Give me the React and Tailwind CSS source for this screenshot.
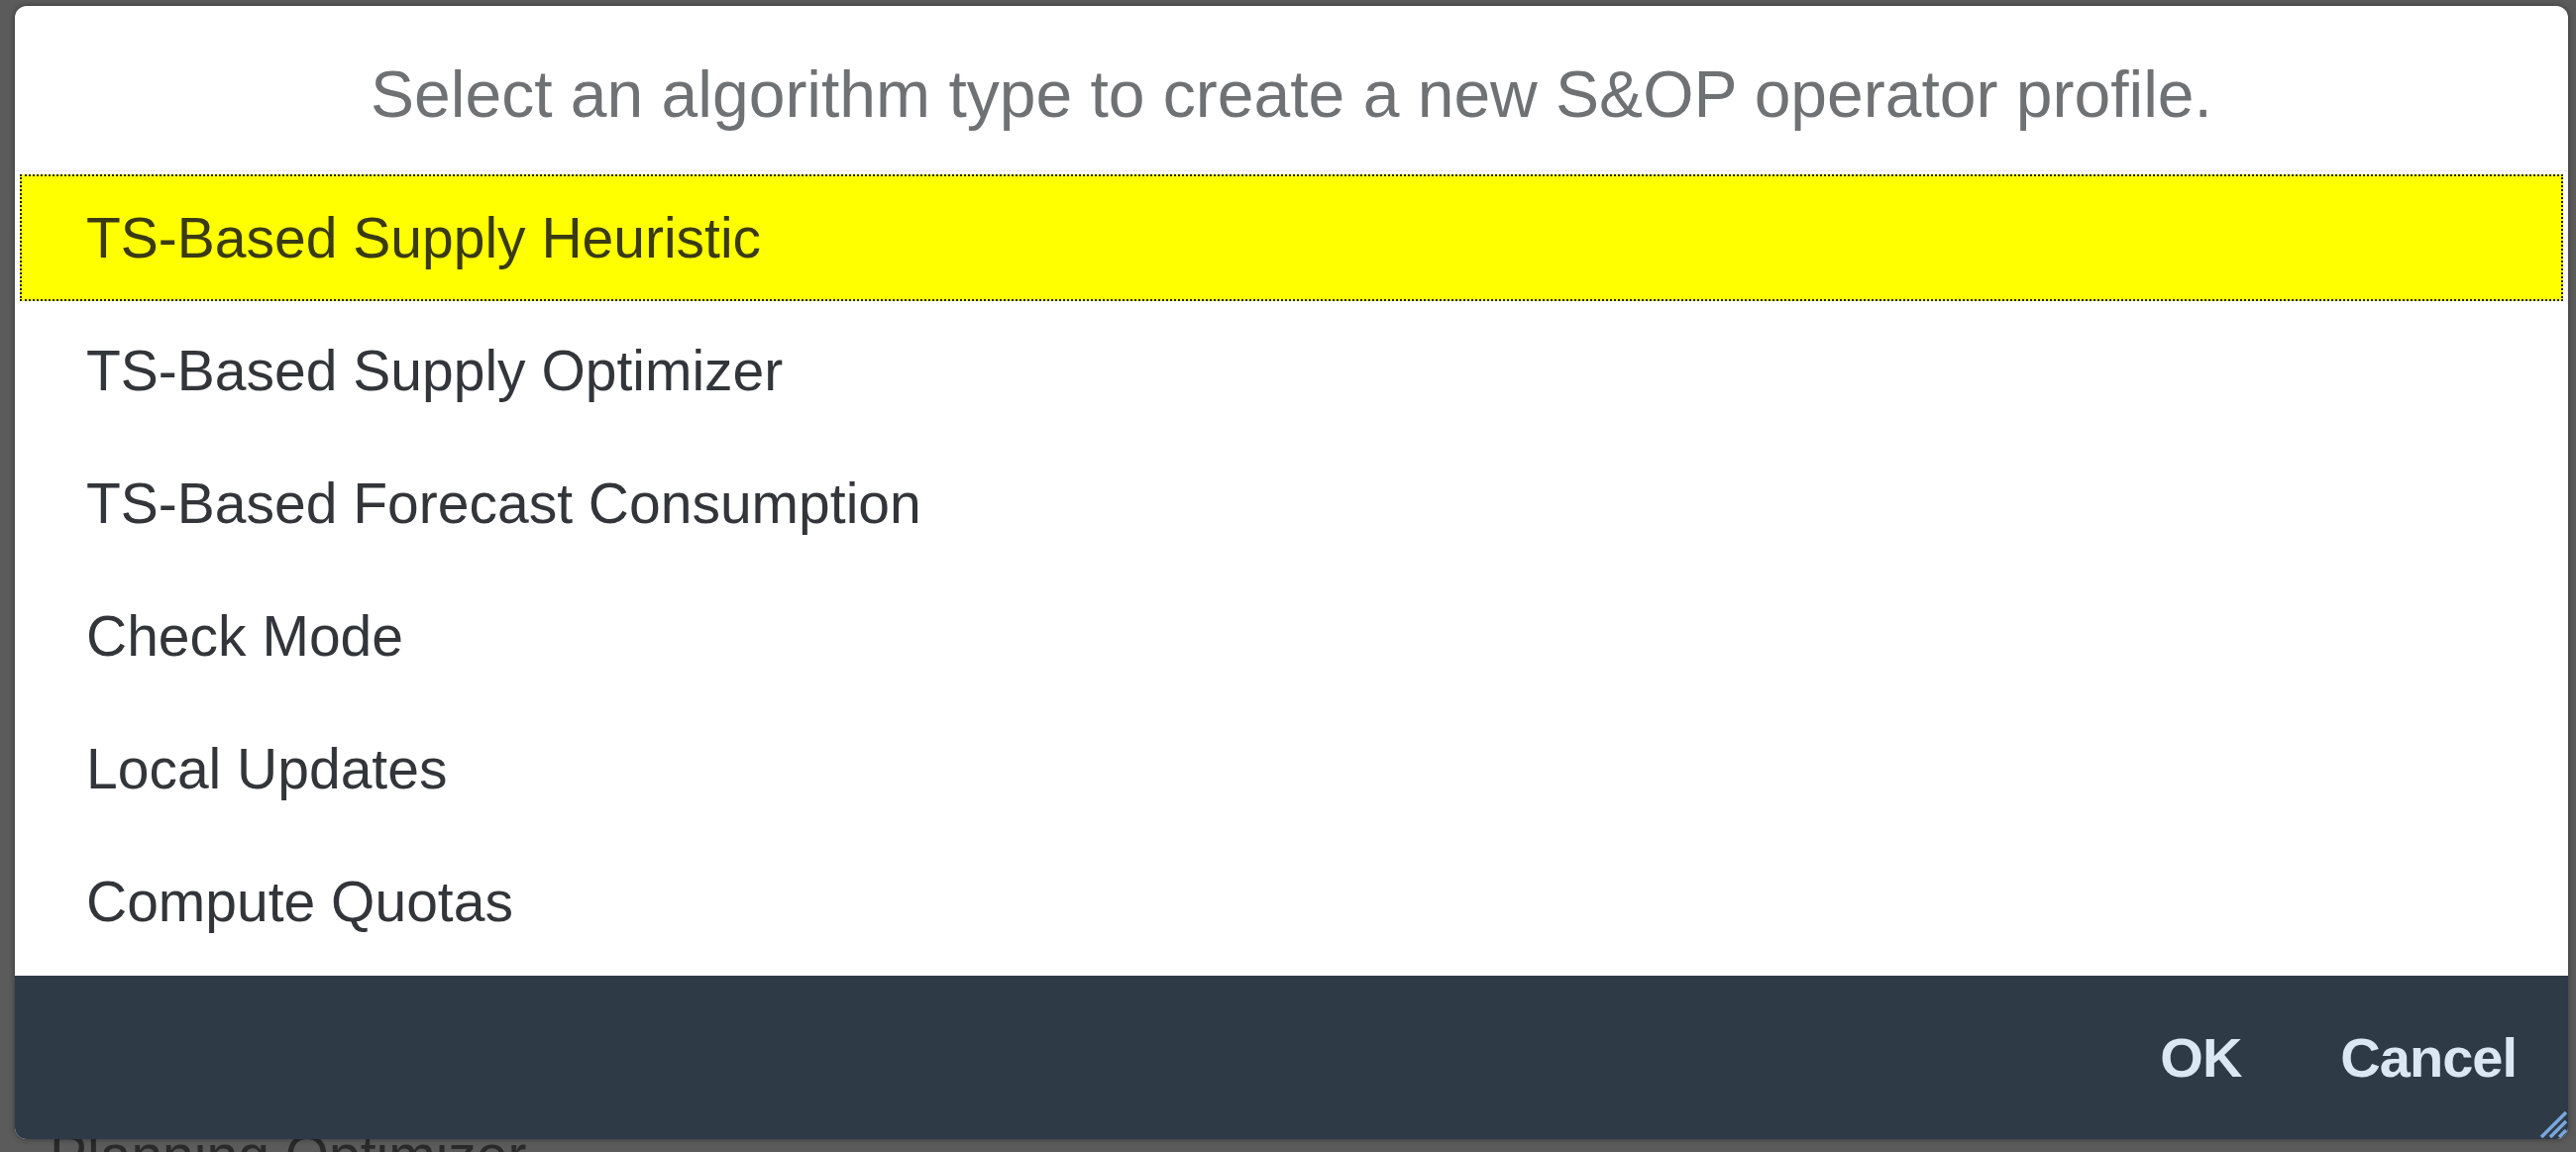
const algorithms = [
  "TS-Based Supply Heuristic",
  "TS-Based Supply Optimizer",
  "TS-Based Forecast Consumption",
  "Check Mode",
  "Local Updates",
  "Compute Quotas",
];

function ResizeHandle() {
  return (
    <svg className="absolute right-[1px] bottom-[1px]" width="40" height="40" viewBox="0 0 40 40">
      <path d="M39 14 L14 39" stroke="#7aa7dc" strokeWidth="3.5" />
      <path d="M39 23 L23 39" stroke="#7aa7dc" strokeWidth="3.5" />
      <path d="M39 32 L32 39" stroke="#7aa7dc" strokeWidth="3.5" />
    </svg>
  );
}

export default function App() {
  const selected = 0;

  return (
    <main className="relative h-[1163px] w-[2600px] overflow-hidden bg-[#5b5b5b] font-['Liberation_Sans',Arial,sans-serif]">
      <div className="relative z-10 ml-[15px] mt-[6px] flex h-[1144px] w-[2577px] flex-col overflow-hidden rounded-[12px] bg-white shadow-[0_0_6px_rgba(0,0,0,0.4)]">
        <header className="flex h-[167px] items-center justify-center border-b border-[#ececec] pt-[12px]">
          <h1 className="text-[66px] leading-none text-[#6f7275]">
            Select an algorithm type to create a new S&amp;OP operator profile.
          </h1>
        </header>

        <ul className="px-[5px] pb-[8px]">
          {algorithms.map((name, i) => (
            <li key={name} className="h-[134px] py-[3px]">
              <div
                className={
                  i === selected
                    ? "flex h-full items-center border-2 border-dotted border-[#222] bg-[#ffff00] pl-[65px] text-[57px] leading-none text-[#3a3a14]"
                    : "flex h-full items-center border-2 border-transparent pl-[65px] text-[57px] leading-none text-[#32363a]"
                }
              >
                {name}
              </div>
            </li>
          ))}
        </ul>

        <footer className="relative mt-auto flex h-[165px] items-center justify-end gap-[100px] bg-[#2e3a46] pr-[52px] text-[56px] font-bold leading-none tracking-[-1px] text-[#dbe7f2]">
          <button className="font-bold">OK</button>
          <button className="font-bold">Cancel</button>
          <ResizeHandle />
        </footer>
      </div>

      <div className="-mt-[12px] pl-[50px] text-[57px] leading-none text-[#2a2a2a]">Planning Optimizer</div>
    </main>
  );
}
